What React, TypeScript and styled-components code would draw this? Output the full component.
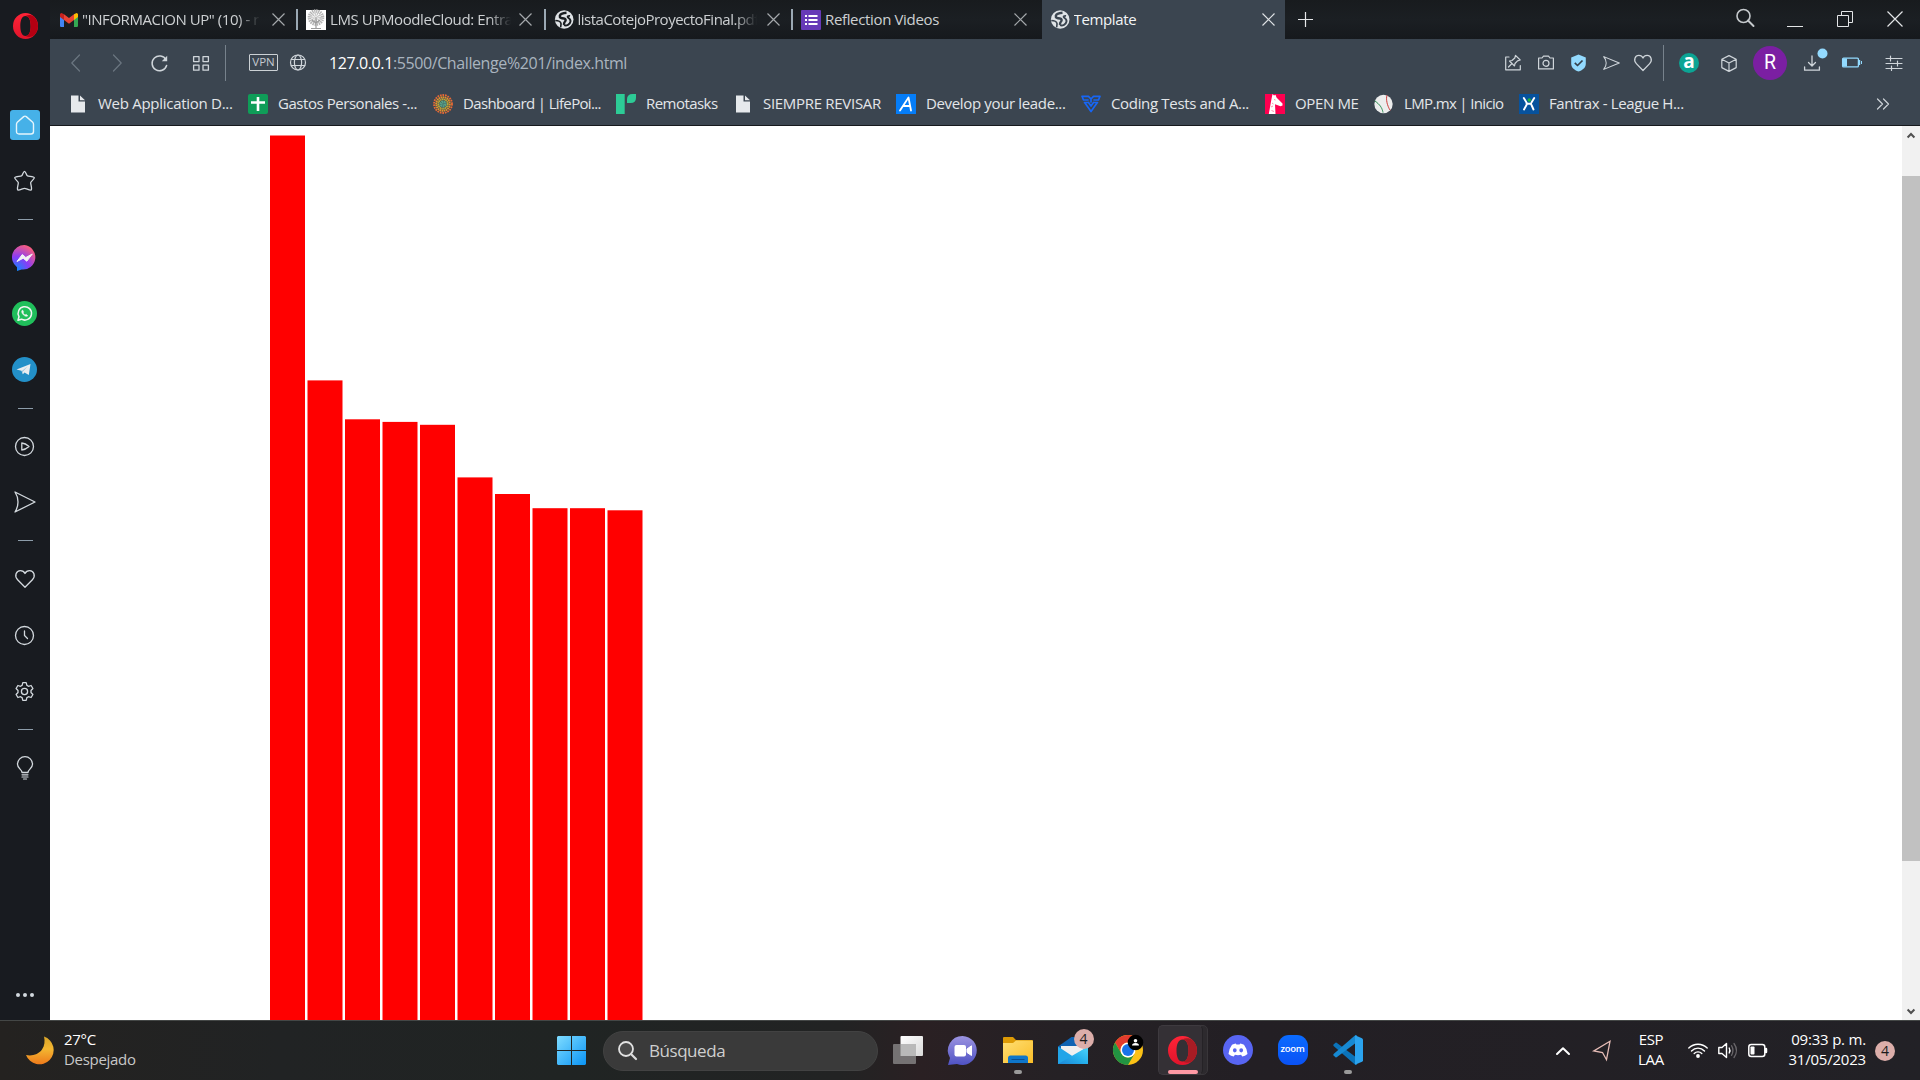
import React from "react";
import styled, { createGlobalStyle } from "styled-components";

const Global = createGlobalStyle`
  *, *::before, *::after { box-sizing: border-box; }
  html, body { margin: 0; padding: 0; overflow: hidden; }
  body { font-family: "Open Sans", "Noto Sans", sans-serif; font-size: 15px; background: #181b20; }
  svg { display: block; flex: none; overflow: visible; }
`;

const Screen = styled.div`
  width: 1920px;
  height: 1080px;
  display: flex;
  flex-direction: column;
  overflow: hidden;
`;
const Browser = styled.div`
  height: 1020px;
  display: flex;
`;
const Sidebar = styled.nav`
  width: 50px;
  padding-right: 1px;
  background: #181b20;
  display: flex;
  flex-direction: column;
  align-items: center;
  flex: none;
`;
const LogoSlot = styled.div`
  height: 97px;
  padding: 13px 0 0 1px;
`;
const SideSlot = styled.div`
  height: 56px;
  display: flex;
  align-items: center;
  justify-content: center;
`;
const HomeTile = styled.div`
  width: 30px;
  height: 30px;
  margin-left: 1px;
  border-radius: 3px;
  background: #46b1e8;
  display: flex;
  align-items: center;
  justify-content: center;
`;
const SideRule = styled.div`
  height: 20.7px;
  padding-left: 2px;
  display: flex;
  align-items: center;
  &::after { content: ""; width: 15px; height: 1px; background: #8d9daa; }
`;
const SideMore = styled.div`
  margin-top: auto;
  height: 50px;
  display: flex;
  align-items: center;
`;
const Main = styled.div`
  flex: 1;
  display: flex;
  flex-direction: column;
  min-width: 0;
`;
const TabBar = styled.div`
  height: 39px;
  background: linear-gradient(#181b1e, #1b1f23 50%, #16191d);
  display: flex;
`;
const Tab = styled.div<{ $active?: boolean; $first?: boolean }>`
  width: ${(p) => (p.$active ? 243 : p.$first ? 247 : 247.5)}px;
  margin-left: ${(p) => (p.$active ? 2.5 : 0)}px;
  padding: 0 ${(p) => (p.$active ? 7 : 9)}px 0 ${(p) => (p.$active ? 7.5 : 9)}px;
  height: 39px;
  display: flex;
  align-items: center;
  flex: none;
  position: relative;
  background: ${(p) => (p.$active ? "#3b4550" : "transparent")};
  color: ${(p) => (p.$active ? "#f3f5f6" : "#cdd0d2")};
`;
const TabRule = styled.i`
  position: absolute;
  left: -1px;
  top: 9px;
  width: 2px;
  height: 21px;
  background: #9ba9b4;
`;
const TabTitle = styled.span<{ $w: number; $fade?: boolean; $ls: number }>`
  width: ${(p) => p.$w}px;
  margin: -2px 0 0 4px;
  white-space: nowrap;
  overflow: hidden;
  line-height: 24px;
  letter-spacing: ${(p) => p.$ls}px;
  ${(p) => p.$fade && "mask-image: linear-gradient(90deg, #000 calc(100% - 22px), transparent);"}
`;
const TabClose = styled.span`
  margin-left: auto;
  width: 20px;
  display: flex;
  justify-content: center;
`;
const NewTab = styled.div`
  width: 40px;
  display: flex;
  align-items: center;
  justify-content: center;
`;
const WindowControls = styled.div`
  margin-left: auto;
  display: flex;
`;
const Control = styled.div`
  width: 50px;
  height: 38px;
  display: flex;
  align-items: center;
  justify-content: center;
`;
const Toolbar = styled.div`
  height: 48px;
  background: #3b4550;
  display: flex;
  align-items: center;
  padding: 0 6px 0 7px;
`;
const Slot = styled.span<{ $w: number }>`
  width: ${(p) => p.$w}px;
  display: flex;
  flex: none;
  justify-content: center;
  align-items: center;
`;
const ToolRule = styled.span`
  width: 1px;
  height: 36px;
  background: #77828c;
  flex: none;
  margin-left: 1px;
`;
const ToolRuleRight = styled(ToolRule)`
  margin: 0 3px 0 4px;
`;
const Vpn = styled.span`
  width: 29px;
  height: 17px;
  margin: -1px 0 0 23px;
  border: 1px solid #ccd1d5;
  border-radius: 1px;
  color: #c4cad0;
  font-size: 11.5px;
  line-height: 14px;
  text-align: center;
`;
const Url = styled.span`
  margin: -1px 0 0 11px;
  font-size: 16px;
  letter-spacing: -0.4px;
  color: #a9b4bf;
  b { font-weight: 400; color: #fff; }
`;
const ToolRight = styled.div`
  margin-left: auto;
  display: flex;
  align-items: center;
`;
const Round = styled.span<{ $size: number; $bg: string }>`
  width: ${(p) => p.$size}px;
  height: ${(p) => p.$size}px;
  border-radius: 50%;
  background: ${(p) => p.$bg};
  color: #fff;
  flex: none;
  display: flex;
  align-items: center;
  justify-content: center;
`;
const LetterA = styled.span`
  font: 700 19px/18px "Open Sans", sans-serif;
  margin-top: -4px;
`;
const LetterR = styled.span`
  font: 400 19.5px/20px Roboto, sans-serif;
`;
const Bookmarks = styled.div`
  height: 39px;
  background: #3b4550;
  border-bottom: 1px solid #16191d;
  display: flex;
  align-items: center;
  padding: 0 31px 4px 18px;
`;
const Bookmark = styled.div<{ $w: number }>`
  width: ${(p) => p.$w}px;
  display: flex;
  align-items: center;
  flex: none;
`;
const BookmarkLabel = styled.span<{ $ls: number }>`
  margin: -2px 0 0 10px;
  color: #e3e6e9;
  white-space: nowrap;
  letter-spacing: ${(p) => p.$ls}px;
  line-height: 22px;
`;
const Overflow = styled.span`
  margin-left: auto;
`;
const Page = styled.div`
  flex: 1;
  background: #fff;
  display: flex;
  justify-content: space-between;
`;
const ChartSvg = styled.svg`
  && { overflow: hidden; }
`;
const Scrollbar = styled.div`
  width: 18px;
  height: 894px;
  background: #f1f1f1;
  display: flex;
  flex-direction: column;
  align-items: center;
`;
const ScrollUp = styled.div`
  height: 50px;
  padding-top: 6px;
`;
const ScrollDown = styled.div`
  margin-top: auto;
  height: 12px;
`;
const Thumb = styled.div`
  width: 18px;
  height: 685px;
  background: #c1c1c1;
`;

const Taskbar = styled.footer`
  height: 60px;
  border-top: 1px solid #444746;
  background: linear-gradient(90deg, #242220 0, #212324 280px, #202423 560px, #222323 840px, #2a2023 920px, #252125 1060px, #231f24 1250px, #222126 100%);
  display: flex;
  align-items: center;
  color: #fff;
`;
const Weather = styled.div`
  width: 531px;
  padding-left: 26px;
  display: flex;
  align-items: center;
`;
const TwoLines = styled.div<{ $align?: string; $w?: number; $ls?: number }>`
  display: flex;
  flex-direction: column;
  margin-top: -3px;
  text-align: ${(p) => p.$align ?? "left"};
  line-height: 20px;
  white-space: nowrap;
  letter-spacing: ${(p) => p.$ls ?? -0.3}px;
  ${(p) => p.$w && `width: ${p.$w}px;`}
`;
const WeatherText = styled(TwoLines)`
  margin-left: 10px;
  span + span { color: #c8c8c8; }
`;
const StartButton = styled.div`
  width: 29px;
  margin-left: 26px;
`;
const SearchPill = styled.div`
  width: 275px;
  height: 40px;
  margin-left: 17px;
  padding-left: 14px;
  border-radius: 20px;
  background: #3a3a3a;
  border: 1px solid #424242;
  display: flex;
  align-items: center;
  gap: 12px;
  color: #cfcfcf;
  font-size: 17px;
  letter-spacing: -0.45px;
`;
const Apps = styled.div`
  display: flex;
  margin-left: 2px;
`;
const AppSlot = styled.div`
  width: 55px;
  height: 59px;
  padding-bottom: 1px;
  display: flex;
  align-items: center;
  justify-content: center;
  position: relative;
`;
const Running = styled.i<{ $active?: boolean }>`
  position: absolute;
  bottom: 6px;
  left: 50%;
  width: ${(p) => (p.$active ? 30 : 8)}px;
  margin-left: ${(p) => (p.$active ? -15 : -4)}px;
  height: 4px;
  border-radius: 2px;
  background: ${(p) => (p.$active ? "#ff99a4" : "#9a9a9a")};
`;
const TileBack = styled.i`
  position: absolute;
  left: 13px;
  top: 4px;
  width: 40px;
  height: 50px;
  border-radius: 5px;
  background: #2d2a2e;
  border: 1px solid #39363a;
`;
const TileFront = styled.div`
  position: absolute;
  left: 3px;
  top: 4px;
  width: 45px;
  height: 50px;
  border-radius: 5px;
  background: #343035;
  border: 1px solid #3e3a3f;
  border-right-color: #252226;
`;
const Above = styled.div`
  position: relative;
`;
const CountBadge = styled.span<{ $over?: boolean }>`
  width: 20px;
  height: 20px;
  border-radius: 50%;
  background: #dcaeaa;
  color: #1b1b1b;
  font-size: 14px;
  line-height: 20px;
  text-align: center;
  flex: none;
  ${(p) => p.$over && "position: absolute; left: 28.5px; top: 8px;"}
`;
const ZoomTile = styled.div`
  width: 30px;
  height: 30px;
  border-radius: 11px;
  background: linear-gradient(#0a6bff, #0a52f5);
  font: 600 9.5px/27px "Open Sans", sans-serif;
  letter-spacing: -0.3px;
  text-align: center;
`;
const Tray = styled.div`
  margin-left: auto;
  display: flex;
  align-items: center;
  padding-right: 25px;
`;
const TrayGroup = styled.div`
  width: 102px;
  padding: 0 0 0 20px;
  display: flex;
  align-items: center;
  gap: 10px;
`;
const NotifySlot = styled.div`
  margin-left: 9px;
`;

const stroke = (c: string, w = 1.3) => ({ fill: "none", stroke: c, strokeWidth: w, strokeLinecap: "round" as const, strokeLinejoin: "round" as const });
const SIDE = "#d3d9de";
const TOOL = "#cfd5da";

const Cross = ({ s = 13, c = "#a9adb0" }) => (
  <svg width={s} height={s} viewBox={`0 0 ${s} ${s}`}><path d={`M.5 .5L${s - 0.5} ${s - 0.5}M${s - 0.5} .5L.5 ${s - 0.5}`} {...stroke(c, 1.2)} strokeLinecap="butt" /></svg>
);
const OperaO = ({ w, h, dark = "#b40012", id }: { w: number; h: number; dark?: string; id: string }) => (
  <svg width={w} height={h} viewBox="0 0 28 30" preserveAspectRatio="none">
    <defs>
      <linearGradient id={id} x1="0" y1="0" x2="0" y2="1"><stop offset="0" stopColor="#ff2437" /><stop offset="1" stopColor="#e0142b" /></linearGradient>
    </defs>
    <path fillRule="evenodd" d="M14 0A14 15 0 1 0 14 30A14 15 0 1 0 14 0ZM14 3.500C18.300 3.500 19.800 9 19.800 15S18.300 26.500 14 26.500S8.200 21 8.200 15S9.700 3.500 14 3.500Z" fill={`url(#${id})`} />
    <path d="M14 3.500C17 1.800 21 2.200 23.700 4.200C26.300 7 28 10.500 28 15S26.300 23.200 23.700 25.800C21 27.800 17 28.200 14 26.500C18.300 26.500 19.800 21 19.800 15S18.300 3.500 14 3.500Z" fill={dark} />
  </svg>
);
const PageIcon = () => (
  <svg width="20" height="20" viewBox="0 0 20 20"><path d="M3 1.500H10.500V7.500H17V18.500H3Z" fill="#e6e9ec" /><path d="M12 1.500L17 6.300H12Z" fill="#e6e9ec" /></svg>
);
const GlobeSolid = ({ ink }: { ink: string }) => (
  <svg width="20" height="20" viewBox="0 0 20 20">
    <circle cx="10.200" cy="9.500" r="9.300" fill="#dfe3e6" />
    <path d="M12.500 2.800C9.500 3 6.500 3.600 5.800 5.800C5.300 8 8 8.300 10 8.500C12 8.800 12 10.500 11 11.500C10 12.500 9.800 13 10 14.800" fill="none" stroke={ink} strokeWidth="2.400" />
    <path d="M1.300 10.500C4 10.500 6.500 11.500 7 13.500C7.200 15 6.500 15.800 6.800 17.300" fill="none" stroke={ink} strokeWidth="1.600" />
    <path d="M10 15.200C12.500 16.200 16 14.500 16.500 11.500C16.800 9.500 15.500 8.500 14 7.500C13 6.800 14.300 5.500 16 6" fill="none" stroke={ink} strokeWidth="1.900" />
  </svg>
);
const Gmail = () => (
  <svg width="19" height="14" viewBox="-1 0 19 14">
    <path d="M0 2V12.700A1.200 1.200 0 0 0 1.200 14H4V5Z" fill="#4285f4" />
    <path d="M18 2V12.700A1.200 1.200 0 0 1 16.800 14H14V5Z" fill="#34a853" />
    <path d="M14 1.200L16 .2A1.500 1.500 0 0 1 18 2V4L14 7Z" fill="#fbbc04" />
    <path d="M4 1.200L2 .2A1.500 1.500 0 0 0 0 2V4L4 7Z" fill="#c5221f" />
    <path d="M4 1.200L9 5L14 1.200V7L9 10.800L4 7Z" fill="#ea4335" />
  </svg>
);
const Tree = () => (
  <svg width="20" height="20" viewBox="0 0 20 20">
    <rect width="20" height="20" fill="#fff" />
    <circle cx="10" cy="7.500" r="6.500" fill="none" stroke="#b4b4b4" strokeWidth="3.600" strokeDasharray="1.300 .7" />
    <circle cx="10" cy="7.500" r="3" fill="none" stroke="#c0c0c0" strokeWidth="4" strokeDasharray="1 .8" />
    <path d="M10 7V18M10 13L6 10M10 13L14 10M5 18.500H15" stroke="#9a9a9a" strokeWidth="1.200" />
  </svg>
);
const FormsIcon = () => (
  <svg width="20" height="20" viewBox="0 0 20 20">
    <rect width="20" height="20" rx="1" fill="#673ab7" />
    {[6, 10, 14].map((y) => <path key={y} d={`M4 ${y}H6M7.500 ${y}H16.500`} stroke="#fff" strokeWidth="2" />)}
  </svg>
);
const SheetIcon = () => (
  <svg width="20" height="20" viewBox="0 0 20 20"><rect width="20" height="20" rx="2" fill="#0f9d58" /><path d="M3 8.500H17M10 3V17" stroke="#fff" strokeWidth="2.600" /></svg>
);
const Sunburst = () => (
  <svg width="20" height="20" viewBox="0 0 20 20" fill="none">
    <circle cx="10" cy="10" r="9" stroke="#ea6a35" strokeWidth="1.800" strokeDasharray="1.700 .9" />
    <circle cx="10" cy="10" r="6.800" stroke="#e3932c" strokeWidth="1.900" strokeDasharray="1.600 .5" />
    <circle cx="10" cy="10" r="4.700" stroke="#b9a63a" strokeWidth="1.900" strokeDasharray="1.500 .35" />
    <circle cx="10" cy="10" r="2" stroke="#569f86" strokeWidth="3.200" strokeDasharray="1.500 .3" />
  </svg>
);
const Remo = () => (
  <svg width="20" height="20" viewBox="0 0 20 20" fill="#2dcb96"><path d="M0 0H8.700V20H0Z" /><path d="M11 9V5.500Q11 0 16.500 0H20V4Q20 9 14.500 9Z" /></svg>
);
const BlueA = () => (
  <svg width="20" height="20" viewBox="0 0 20 20"><rect width="20" height="20" fill="#057df8" /><path d="M4 16.500L12.500 3.500L15 16.500M7 12H14" {...stroke("#fff", 1.800)} /></svg>
);
const Wings = () => (
  <svg width="20" height="20" viewBox="0 0 20 20"><path d="M1 2.300H7.500L10 5L12.500 2.300H19L17.600 5.800L13 6M1 2.300L2.400 5.800L7 6M3.500 8.500H7.500M16.500 8.500H12.500M3.800 8.700L6.500 12.500L10 17.500L13.500 12.500L16.200 8.700M10 5V8M7.500 8.500L10 12L12.500 8.500" {...stroke("#1766f5", 1.700)} /></svg>
);
const Giraffe = () => (
  <svg width="20" height="20" viewBox="0 0 20 20">
    <rect width="20" height="20" fill="#ff0050" />
    <path d="M7.500 0L9 1.500L10.500 .8L11.500 3.500L17.500 9.500V11.500L15.500 12.200L10 10.300L10.500 20H3.800L6.300 6Z" fill="#fff" />
    <path d="M7 9L8.500 10M6 13L8 12M6.500 16.500L9 17.500M9 5.500L10.500 6" stroke="#ff8fb0" strokeWidth="1" />
  </svg>
);
const Ball = () => (
  <svg width="20" height="20" viewBox="0 0 20 20">
    <circle cx="9.500" cy="10" r="9.200" fill="#eceded" />
    <path d="M13 1.500C11.500 6 14 13 16 16" {...stroke("#c33", 1)} strokeDasharray="1.500 .6" />
    <path d="M1 7C5 10 8 13 9 18.500" {...stroke("#2f8f55", 1)} strokeDasharray="1.500 .6" />
  </svg>
);
const Fantrax = () => (
  <svg width="20" height="20" viewBox="0 0 20 20">
    <rect width="20" height="20" fill="#07529d" />
    <path d="M4.800 4L7.500 8.500Q8.200 9.800 7.500 11L5 15.500M15.200 4L12.500 8.500Q11.500 9.800 12.500 11L14.500 15.500M7.500 9.800H12" {...stroke("#fff", 1.900)} />
    <circle cx="10.300" cy="6" r="1.800" fill="#1fb53a" />
  </svg>
);
const Heart = ({ s, c, w = 1.3 }: { s: number; c: string; w?: number }) => (
  <svg width={s} height={s} viewBox="0 0 20 20"><path d="M10 18.300L2.600 10.700C-1 7 1.200 1.600 5.400 1.600C7.500 1.600 9.200 2.700 10 4.500C10.800 2.700 12.500 1.600 14.600 1.600C18.800 1.600 21 7 17.400 10.700Z" {...stroke(c, w)} /></svg>
);
const Send = ({ w, h, c, sw = 1.3 }: { w: number; h: number; c: string; sw?: number }) => (
  <svg width={w} height={h} viewBox="0 0 22 22" preserveAspectRatio="none"><path d="M1 1L21 11L1 21C5 15 5 7 1 1Z" {...stroke(c, sw)} /></svg>
);

const tabs = [
  { icon: <Gmail />, title: '"INFORMACION UP" (10) - r', w: 178, fade: true, ls: -0.45 },
  { icon: <Tree />, title: "LMS UPMoodleCloud: Entrar", w: 181, fade: true, ls: -0.4 },
  { icon: <GlobeSolid ink="#191d21" />, title: "listaCotejoProyectoFinal.pdf", w: 179, fade: true, ls: -0.5 },
  { icon: <FormsIcon />, title: "Reflection Videos", w: 180, ls: -0.35 },
  { icon: <GlobeSolid ink="#3b4550" />, title: "Template", w: 180, active: true, ls: -0.35 },
];

const bookmarks = [
  { icon: <PageIcon />, label: "Web Application D...", w: 180, ls: -0.28 },
  { icon: <SheetIcon />, label: "Gastos Personales -...", w: 185, ls: -0.45 },
  { icon: <Sunburst />, label: "Dashboard | LifePoi...", w: 183, ls: -0.65 },
  { icon: <Remo />, label: "Remotasks", w: 117, ls: -0.55 },
  { icon: <PageIcon />, label: "SIEMPRE REVISAR", w: 163, ls: -0.3 },
  { icon: <BlueA />, label: "Develop your leade...", w: 185, ls: -0.35 },
  { icon: <Wings />, label: "Coding Tests and A...", w: 184, ls: -0.33 },
  { icon: <Giraffe />, label: "OPEN ME", w: 109, ls: -0.35 },
  { icon: <Ball />, label: "LMP.mx | Inicio", w: 145, ls: -0.65 },
  { icon: <Fantrax />, label: "Fantrax - League H...", w: 200, ls: -0.38 },
];

const barTops = [9.5, 254.4, 293.3, 295.9, 298.8, 351.4, 368, 382.2, 382.2, 384.3];

const BarChart = () => (
  <ChartSvg width="750" height="894" viewBox="0 0 750 894">
    {barTops.map((top, i) => (
      <rect key={i} x={220 + i * 37.5} y={top} width="35" height={894 - top} fill="#ff0000" />
    ))}
  </ChartSvg>
);

const MessengerIcon = () => (
  <svg width="25" height="26" viewBox="0 0 25 26">
    <defs><radialGradient id="msg" cx=".2" cy="1" r="1.100"><stop offset="0" stopColor="#0a8dff" /><stop offset=".5" stopColor="#8a3cf5" /><stop offset="1" stopColor="#ff5f78" /></radialGradient></defs>
    <path d="M12.500 0A12.300 12.300 0 1 1 9.500 24.500L5 26V22.200A12.300 12.300 0 0 1 12.500 0Z" fill="url(#msg)" />
    <path d="M5 16.500L10.300 9.500L13.800 12.500L20.300 9L14.800 16.200L11.200 13.200Z" fill="#f2f2f4" stroke="#f2f2f4" strokeLinejoin="round" />
  </svg>
);
const WhatsappIcon = () => (
  <svg width="25" height="25" viewBox="0 0 25 25">
    <circle cx="12.500" cy="12.500" r="12.500" fill="#20bf5b" />
    <path d="M6 19.200L7 15.700A6.700 6.700 0 1 1 9.500 18.200Z" {...stroke("#f1f5f2", 1.500)} />
    <path d="M10.200 9.200C9 10.500 10 12.500 11.300 13.800S14.500 15.900 15.800 14.800L14.200 13.300L13 13.900C12.200 13.500 11.500 12.700 11.100 12L11.600 10.900L10.800 9.200Z" fill="#f1f5f2" stroke="#f1f5f2" strokeWidth=".5" />
  </svg>
);
const TelegramIcon = () => (
  <svg width="25" height="25" viewBox="0 0 25 25">
    <circle cx="12.500" cy="12.500" r="12.500" fill="#2390c8" />
    <path d="M4.500 12.600L18.500 7L16.800 18L12.500 15.500L10.800 17.200L9.500 13.800Z" fill="#e9edf0" />
    <path d="M9.800 14L15.500 9.500L11 14.500L10.800 16.800Z" fill="#9fc5dc" />
  </svg>
);

export default function App() {
  return (
    <Screen>
      <Global />
      <Browser>
        <Sidebar>
          <LogoSlot><OperaO id="op1" w={25} h={26} /></LogoSlot>
          <SideSlot>
            <HomeTile>
              <svg width="20" height="20" viewBox="0 0 20 20"><path d="M1.500 9.200Q1.500 8 2.300 7.200L8.700 1.600Q10 .6 11.300 1.600L17.700 7.200Q18.500 8 18.500 9.200V16.500Q18.500 19 16 19H4Q1.500 19 1.500 16.500Z" {...stroke("#e5f5fc", 1.400)} /></svg>
            </HomeTile>
          </SideSlot>
          <SideSlot>
            <svg width="21" height="20" viewBox="0 0 21 20"><path d="M10.500 .3C11.700 .3 12.200 4 13.300 4.800C14.400 5.600 19.900 5.200 20.300 6.700C20.600 8 17 10.200 16.700 11.600C16.400 13 18.500 17.800 17.200 18.900C15.800 19.700 12.200 17.300 10.500 17.300S5.200 19.700 3.800 18.900C2.500 17.800 4.600 13 4.300 11.600C4 10.200 .4 8 .7 6.700C1.100 5.200 6.600 5.600 7.700 4.800C8.800 4 9.300 .3 10.500 .3Z" {...stroke(SIDE)} /></svg>
          </SideSlot>
          <SideRule />
          <SideSlot><MessengerIcon /></SideSlot>
          <SideSlot><WhatsappIcon /></SideSlot>
          <SideSlot><TelegramIcon /></SideSlot>
          <SideRule />
          <SideSlot>
            <svg width="19" height="19" viewBox="0 .5 19 19"><circle cx="9.500" cy="10" r="9" {...stroke(SIDE)} /><path d="M6.800 6.500Q10.500 6.800 14 10Q10.500 13.200 6.800 13.500Z" {...stroke(SIDE)} /></svg>
          </SideSlot>
          <SideSlot><Send w={22} h={22} c={SIDE} /></SideSlot>
          <SideRule />
          <SideSlot><Heart s={20} c={SIDE} /></SideSlot>
          <SideSlot>
            <svg width="19" height="19" viewBox="0 .5 19 19"><circle cx="9.500" cy="10" r="9" {...stroke(SIDE)} /><path d="M9.500 5.500V10L12.500 13" {...stroke(SIDE)} /></svg>
          </SideSlot>
          <SideSlot>
            <svg width="19" height="19" viewBox="0 .5 19 19"><path d="M7.800 1.200H11.200L11.900 3.900L13.500 4.800L16.100 4L17.900 7L16 9V11L17.900 13L16.100 16L13.500 15.200L11.900 16.100L11.200 18.800H7.800L7.100 16.100L5.500 15.200L2.900 16L1.100 13L3 11V9L1.100 7L2.900 4L5.500 4.800L7.100 3.900Z" {...stroke(SIDE)} /><circle cx="9.500" cy="10" r="3.100" {...stroke(SIDE)} /></svg>
          </SideSlot>
          <SideRule />
          <SideSlot>
            <svg width="18" height="24" viewBox="0 0 18 24"><path d="M6 16.500C6 13.500 1.500 12.500 1.500 8.200A7.500 7.500 0 0 1 16.500 8.200C16.500 12.500 12 13.500 12 16.500Z" {...stroke(SIDE)} /><path d="M6 18.800H12M6 21H12M7.500 23H10.500" {...stroke(SIDE, 1.200)} /></svg>
          </SideSlot>
          <SideMore>
            <svg width="18" height="4" viewBox="0 0 18 4" fill={SIDE}><circle cx="2" cy="2" r="2" /><circle cx="9" cy="2" r="2" /><circle cx="16" cy="2" r="2" /></svg>
          </SideMore>
        </Sidebar>
        <Main>
          <TabBar>
            {tabs.map((t, i) => (
              <Tab key={i} $active={t.active} $first={i === 0}>
                {i > 0 && !t.active && <TabRule />}
                {t.icon}
                <TabTitle $w={t.w} $fade={t.fade} $ls={t.ls}>{t.title}</TabTitle>
                <TabClose><Cross c={t.active ? "#dfe2e5" : "#a4a8ab"} /></TabClose>
              </Tab>
            ))}
            <NewTab><svg width="15" height="15" viewBox="0 0 15 15"><path d="M7.500 0V15M0 7.500H15" stroke="#e6e8ea" strokeWidth="1.200" /></svg></NewTab>
            <WindowControls>
              <Control><svg width="18" height="18" viewBox="0 1 18 18"><circle cx="7.500" cy="7" r="6.500" {...stroke("#c5c9cc", 1.600)} /><path d="M12 11.500L17.500 17" {...stroke("#c5c9cc", 2)} /></svg></Control>
              <Control><svg width="16" height="16" viewBox="0 0 16 16"><path d="M0 15.500H16" stroke="#e3e5e7" strokeWidth="1" /></svg></Control>
              <Control><svg width="16" height="16" viewBox="0 0 16 16"><path d="M.5 4.500H11.500V15.500H.5ZM4.500 4.500V.5H15.500V11.500H11.500" fill="none" stroke="#e3e5e7" /></svg></Control>
              <Control><Cross s={16} c="#e3e5e7" /></Control>
            </WindowControls>
          </TabBar>
          <Toolbar>
            <Slot $w={37}><svg width="9" height="16" viewBox="0 0 9 16"><path d="M8.500 0L.8 8L8.500 16" {...stroke("#6b7680", 1.200)} /></svg></Slot>
            <Slot $w={47}><svg width="9" height="16" viewBox="0 0 9 16"><path d="M.5 0L8.200 8L.5 16" {...stroke("#6b7680", 1.200)} /></svg></Slot>
            <Slot $w={37}><svg width="17" height="17" viewBox="0 0 17 17"><path d="M15 4.800A7.400 7.400 0 1 0 15.600 10.500" {...stroke(TOOL, 1.500)} /><path d="M16.200 .8V6.200H10.800Z" fill={TOOL} /></svg></Slot>
            <Slot $w={46}><svg width="16" height="15" viewBox="0 0 16 15"><path d="M.6 .6H6V5.600H.6ZM10 .6H15.400V5.600H10ZM.6 9.200H6V14.200H.6ZM10 9.200H15.400V14.200H10Z" {...stroke(TOOL, 1.300)} /></svg></Slot>
            <ToolRule />
            <Vpn>VPN</Vpn>
            <Slot $w={40}><svg width="16" height="16" viewBox="0 0.500 16 16"><circle cx="8" cy="8" r="7.500" {...stroke(TOOL, 1.200)} /><ellipse cx="8" cy="8" rx="3.600" ry="7.500" {...stroke(TOOL, 1.200)} /><path d="M1.300 5H14.700M1.300 11H14.700" {...stroke(TOOL, 1.200)} /></svg></Slot>
            <Url><b>127.0.0.1</b>:5500/Challenge%201/index.html</Url>
            <ToolRight>
              <Slot $w={34}><svg width="16" height="16" viewBox="0 .5 16 16"><path d="M4 2.500H.7V15.300H15.300V11" {...stroke(TOOL, 1.200)} /><path d="M10.500 .8L15.200 5.500L12.500 6.300L10 9L9.500 11.500L4.500 6.500L7 6L9.800 3.500ZM7 9L3.500 12.500" {...stroke(TOOL, 1.200)} /></svg></Slot>
              <Slot $w={32}><svg width="16" height="14" viewBox="0 .5 16 14"><path d="M.6 2.500H4L5.500 .6H10.500L12 2.500H15.400V13.400H.6Z" {...stroke(TOOL, 1.200)} /><circle cx="8" cy="7.800" r="3" {...stroke(TOOL, 1.200)} /></svg></Slot>
              <Slot $w={33}><svg width="15" height="17" viewBox="0 .5 15 17"><path d="M7.500 0L14.800 3V9C14.800 13 12 15.500 7.500 17C3 15.500 .2 13 .2 9V3Z" fill="#93dafe" /><path d="M3.800 8.300L6.500 11L11.500 6" {...stroke("#35404b", 1.700)} strokeLinecap="butt" /></svg></Slot>
              <Slot $w={32}><Send w={17} h={14} c={TOOL} sw={1.600} /></Slot>
              <Slot $w={32}><Heart s={18} c={TOOL} w={1.400} /></Slot>
              <ToolRuleRight />
              <Slot $w={44}><Round $size={20} $bg="#0ca494"><LetterA>a</LetterA></Round></Slot>
              <Slot $w={36}><svg width="16" height="17" viewBox="0 0 16 17"><path d="M8 .6L15.200 4.300V12.600L8 16.400L.8 12.600V4.300ZM.8 4.300L8 8L15.200 4.300M8 8V16.400" {...stroke(TOOL, 1.200)} /></svg></Slot>
              <Slot $w={46}><Round $size={34} $bg="#7b1fa2"><LetterR>R</LetterR></Round></Slot>
              <Slot $w={37}>
                <svg width="16" height="15" viewBox="0 0 16 15"><path d="M8 0V9.500M4.500 6.500L8 10L11.500 6.500M.6 11V14.200H15.400V11" {...stroke(TOOL, 1.300)} /><circle cx="18.500" cy="-2.500" r="5" fill="#93dafe" /></svg>
              </Slot>
              <Slot $w={44}><svg width="20" height="10" viewBox="0 .5 20 10"><rect x=".6" y=".6" width="15.800" height="8.800" rx="1" {...stroke("#93dafe", 1.300)} /><path d="M1 1H5V9H1Z" fill="#93dafe" /><path d="M17 2.500H18.200V7.500H17ZM19 3.500H20V6.500H19Z" fill="#93dafe" /></svg></Slot>
              <Slot $w={40}><svg width="16" height="14" viewBox="0 0 16 14"><path d="M0 2.500H16M0 7.500H16M0 12.500H16M4.500 0V5M11.500 5V10M5.500 10V14.500" {...stroke(TOOL, 1.200)} /></svg></Slot>
            </ToolRight>
          </Toolbar>
          <Bookmarks>
            {bookmarks.map((b) => (
              <Bookmark key={b.label} $w={b.w}>
                {b.icon}
                <BookmarkLabel $ls={b.ls}>{b.label}</BookmarkLabel>
              </Bookmark>
            ))}
            <Overflow><svg width="12" height="10" viewBox="0 0 12 10"><path d="M.5 0L5.500 5L.5 10M6.500 0L11.500 5L6.500 10" {...stroke("#cdd3d8", 1.200)} /></svg></Overflow>
          </Bookmarks>
          <Page>
            <BarChart />
            <Scrollbar>
              <ScrollUp><svg width="8" height="7" viewBox="0 0 8 7"><path d="M.6 5.500L4 2L7.400 5.500" fill="none" stroke="#505050" strokeWidth="2" /></svg></ScrollUp>
              <Thumb />
              <ScrollDown><svg width="8" height="7" viewBox="0 0 8 7"><path d="M.6 1.500L4 5L7.400 1.500" fill="none" stroke="#505050" strokeWidth="2" /></svg></ScrollDown>
            </Scrollbar>
          </Page>
        </Main>
      </Browser>
      <Taskbar>
        <Weather>
          <svg width="28" height="28" viewBox="0 0.500 28 28">
            <defs><linearGradient id="moon" x1="0" y1="0" x2="0" y2="1"><stop offset="0" stopColor="#d9a528" /><stop offset=".45" stopColor="#f3b631" /><stop offset="1" stopColor="#ee7a1b" /></linearGradient></defs>
            <path d="M18 0A14.300 14.300 0 1 1 0 18.500C6 19.800 12.500 18 16 13C18.800 9 19 4.500 18 0Z" fill="url(#moon)" />
          </svg>
          <WeatherText><span>27°C</span><span>Despejado</span></WeatherText>
        </Weather>
        <StartButton>
          <svg width="29" height="29" viewBox="0 0 29 29">
            <defs><linearGradient id="win" x1="0" y1="0" x2="1" y2="1"><stop offset="0" stopColor="#7fdcff" /><stop offset="1" stopColor="#0a94f5" /></linearGradient></defs>
            <path d="M1 0H14V14H0V1ZM15 0H28L29 1V14H15ZM0 15H14V29H1L0 28ZM15 15H29V28L28 29H15Z" fill="url(#win)" />
          </svg>
        </StartButton>
        <SearchPill>
          <svg width="19" height="19" viewBox="0 0 19 19"><circle cx="8" cy="8" r="7" fill="#4a4a4a" stroke="#e2e2e2" strokeWidth="1.800" /><path d="M13 13L18 18" stroke="#dcdcdc" strokeWidth="2.200" strokeLinecap="round" /></svg>
          <span>Búsqueda</span>
        </SearchPill>
        <Apps>
          <AppSlot>
            <svg width="30" height="28" viewBox="0 0 30 28"><defs><linearGradient id="tv" x1="0" y1="0" x2="1" y2="1"><stop offset="0" stopColor="#fff" /><stop offset="1" stopColor="#d9d9d9" /></linearGradient></defs><rect x="7.500" width="22.500" height="20" rx="1" fill="url(#tv)" /><rect y="8" width="23" height="20" rx="1" fill="#757273" /><path d="M7.500 8H23V20H7.500Z" fill="#b9b9b9" /></svg>
          </AppSlot>
          <AppSlot>
            <svg width="29" height="29" viewBox="0 0 29 29"><defs><linearGradient id="chat" x1="0" y1="0" x2="0" y2="1"><stop offset="0" stopColor="#9b93e0" /><stop offset="1" stopColor="#4f52c4" /></linearGradient></defs><path d="M14.500 0A14.500 14.500 0 1 1 9 28L0 29L2 22A14.500 14.500 0 0 1 14.500 0Z" fill="url(#chat)" /><rect x="6.500" y="9" width="11.500" height="11.500" rx="2" fill="#fff" /><path d="M19 13L23.500 9.800V19.500L19 16.500Z" fill="#fff" stroke="#fff" strokeLinejoin="round" /></svg>
          </AppSlot>
          <AppSlot>
            <svg width="30" height="26" viewBox="0 0 30 26"><defs><linearGradient id="fold" x1="0" y1="0" x2="1" y2="1"><stop offset="0" stopColor="#ffdf74" /><stop offset="1" stopColor="#fabd28" /></linearGradient></defs><path d="M0 1Q0 0 1 0H10L13 3H29Q30 3 30 4V12H0Z" fill="#dd9a05" /><path d="M0 6H10L13 3.500H29Q30 3.500 30 4.500V26H0Z" fill="url(#fold)" /><path d="M5 26V21Q5 18.500 7.500 18.500H22.500Q25 18.500 25 21V26Z" fill="#0f76ca" /><path d="M8.500 22.500H21.500" stroke="#0b4e90" /></svg>
            <Running />
          </AppSlot>
          <AppSlot>
            <svg width="30" height="27" viewBox="0 0 30 27"><defs><linearGradient id="mail" x1="0" y1="1" x2="1" y2="0"><stop offset="0" stopColor="#1c86d6" /><stop offset=".5" stopColor="#26b0ec" /><stop offset="1" stopColor="#4fd6fb" /></linearGradient></defs><path d="M0 9.500L13.500 0H16.500L30 9.500V18H0Z" fill="#0e63b3" /><path d="M3 9H27V17L15 22L3 15Z" fill="#f0f0f0" /><path d="M0 9.500L15 19.500L30 9.500V27H0Z" fill="#22a5e8" /><path d="M0 27L30 9.500V27Z" fill="url(#mail)" /></svg>
            <CountBadge $over>4</CountBadge>
          </AppSlot>
          <AppSlot>
            <svg width="30" height="30" viewBox="0 0 30 30">
              <circle cx="15" cy="15" r="15" fill="#fbc116" />
              <path d="M2 7.500A15 15 0 0 1 28 7.500H15A7.500 7.500 0 0 0 8.500 18.700Z" fill="#e33b2e" />
              <path d="M2 7.500L8.500 18.700A7.500 7.500 0 0 0 21.500 18.800L15 30A15 15 0 0 1 2 7.500Z" fill="#229342" />
              <circle cx="15" cy="15" r="7.500" fill="#fff" /><circle cx="15" cy="15" r="6" fill="#1a73e8" />
              <circle cx="22.500" cy="7.500" r="7.800" fill="#000" /><circle cx="22.500" cy="5.700" r="1.800" fill="#fff" /><path d="M19 10.500Q19 8 22.500 8T26 10.500Z" fill="#fff" />
            </svg>
          </AppSlot>
          <AppSlot>
            <TileBack /><TileFront />
            <Above><OperaO id="op2" w={29} h={29} dark="#a81c24" /></Above>
            <Running $active />
          </AppSlot>
          <AppSlot>
            <svg width="30" height="30" viewBox="0 0 30 30"><circle cx="15" cy="15" r="15" fill="#5865f2" /><path fillRule="evenodd" d="M9 9.800Q11 8.700 12.800 8.500L13.400 9.600H16.600L17.200 8.500Q19 8.700 21 9.800Q24.500 14.500 24.500 19Q22 21 19.200 21.500L18.100 19.800Q15 20.700 11.900 19.800L10.800 21.500Q8 21 5.500 19Q5.500 14.500 9 9.800ZM11.800 13.200A1.900 2.100 0 1 0 11.800 17.400A1.900 2.100 0 1 0 11.800 13.200ZM18.200 13.200A1.900 2.100 0 1 0 18.200 17.400A1.900 2.100 0 1 0 18.200 13.200Z" fill="#fff" /></svg>
          </AppSlot>
          <AppSlot><ZoomTile>zoom</ZoomTile></AppSlot>
          <AppSlot>
            <svg width="30" height="30" viewBox="0 0 30 30"><path d="M.5 9.500L2.500 7.800Q3.200 7.300 4 7.900L24 23V29.500Q22.500 30.200 21.300 29L.6 11Q0 10.200 .5 9.500Z" fill="#0b73b9" /><path d="M.5 20.500L2.500 22.200Q3.200 22.700 4 22.100L24 7V.5Q22.500-.2 21.300 1L.6 19Q0 19.800 .5 20.500Z" fill="#1789d2" /><path d="M22 .2L29 3.300Q30 3.800 30 4.800V25.200Q30 26.200 29 26.700L22 29.800Z" fill="#2ba3ee" /></svg>
            <Running />
          </AppSlot>
        </Apps>
        <Tray>
          <svg width="14" height="8" viewBox="0 0 14 8"><path d="M1 7L7 1.200L13 7" {...stroke("#fff", 2)} /></svg>
          <Slot $w={64}><svg width="18" height="20" viewBox="0 0.500 18 20"><path d="M17 .8L.8 10.500L9.500 12L13.500 19.200Z" {...stroke("#e6bcb6", 1.300)} strokeLinejoin="miter" /></svg></Slot>
          <TwoLines $align="center" $w={34}><span>ESP</span><span>LAA</span></TwoLines>
          <TrayGroup>
            <svg width="20" height="16" viewBox="0 0.500 20 16"><path d="M.8 5.500A13 13 0 0 1 19.200 5.500M3.500 8.400A9 9 0 0 1 16.500 8.400M6.200 11A5.300 5.300 0 0 1 13.800 11" {...stroke("#fff", 1.400)} /><circle cx="10" cy="13.500" r="1.900" fill="#fff" /></svg>
            <svg width="20" height="18" viewBox="0 0.500 20 18"><path d="M.8 6H4L8.500 2V16L4 12H.8Z" {...stroke("#fff", 1.400)} /><path d="M11.200 6.500Q12.700 9 11.200 11.500" {...stroke("#fff", 1.400)} /><path d="M13.500 4.200Q16.500 9 13.500 13.800M16 2Q21 9 16 16" {...stroke("#69666a", 1.300)} /></svg>
            <svg width="20" height="14" viewBox="0 0.500 20 14"><rect x=".8" y="1" width="16" height="12" rx="2.500" {...stroke("#fff", 1.500)} /><rect x="2.500" y="3" width="4" height="8" rx=".8" fill="#fff" /><path d="M18 5.500V8.500" stroke="#fff" strokeWidth="2.500" strokeLinecap="round" /></svg>
          </TrayGroup>
          <TwoLines $align="right" $w={96} $ls={-0.2}><span>09:33 p. m.</span><span>31/05/2023</span></TwoLines>
          <NotifySlot><CountBadge as="div">4</CountBadge></NotifySlot>
        </Tray>
      </Taskbar>
    </Screen>
  );
}
